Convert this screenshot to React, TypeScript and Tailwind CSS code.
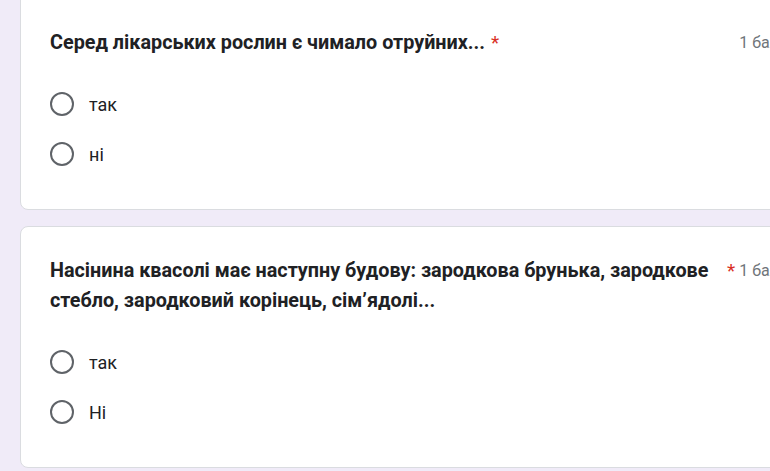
import React from 'react';

interface Question {
  title: string;
  options: string[];
}

const questions: Question[] = [
  {
    title: 'Серед лікарських рослин є чимало отруйних...',
    options: ['так', 'ні'],
  },
  {
    title:
      'Насінина квасолі має наступну будову: зародкова брунька, зародкове стебло, зародковий корінець, сім’ядолі...',
    options: ['так', 'Ні'],
  },
];

const Radio: React.FC<{ label: string }> = ({ label }) => (
  <label className="flex items-center h-[50px] cursor-pointer">
    <span className="w-6 h-6 rounded-full border-2 border-[#5f6368] shrink-0" />
    <span className="ml-[15px] text-[18px] text-[#202124]">{label}</span>
  </label>
);

const QuestionCard: React.FC<{ q: Question; first?: boolean }> = ({ q, first }) => (
  <div
    className={`w-[789px] bg-white rounded-lg border border-[#dadce0] px-[29px] pt-[29px] pb-[30px] ${
      first ? '-mt-[2px] rounded-t-none' : 'mt-[16px]'
    }`}
  >
    <div className="flex items-start">
      <div className="min-w-0 text-[19.8px] leading-[30px] font-bold text-[#202124]">{q.title}</div>
      <span className="pl-[6px] text-[19px] leading-[30px] text-[#d93025] shrink-0">*</span>
      <span className="ml-auto pl-[4px] shrink-0 whitespace-nowrap text-[16px] leading-[30px] text-[#70757a]">
        1 бал
      </span>
    </div>
    <div className="mt-[21px]">
      {q.options.map((o) => (
        <Radio key={o} label={o} />
      ))}
    </div>
  </div>
);

export default function App() {
  return (
    <div
      className="w-[770px] h-[471px] overflow-hidden bg-[#f0ebf8]"
      style={{ fontFamily: 'Roboto, "Noto Sans", sans-serif' }}
    >
      <div className="pl-[20px]">
        {questions.map((q, i) => (
          <QuestionCard key={i} q={q} first={i === 0} />
        ))}
      </div>
    </div>
  );
}
